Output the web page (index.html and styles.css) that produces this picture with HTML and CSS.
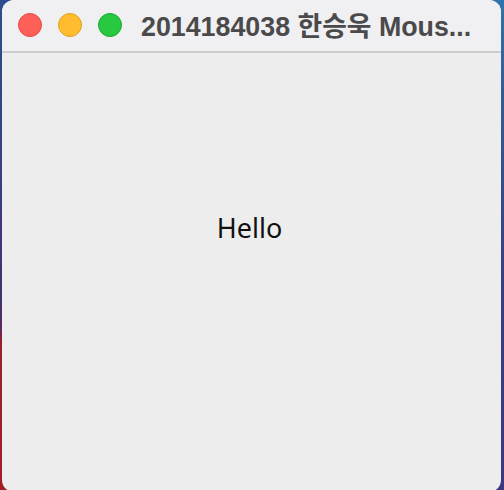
FILE: index.html
```html
<!DOCTYPE html>
<html lang="ko">
<head>
<meta charset="utf-8">
<title>Window</title>
<link rel="stylesheet" href="styles.css">
</head>
<body>
<div class="window">
  <div class="titlebar">
    <div class="lights">
      <span class="light red"></span>
      <span class="light yellow"></span>
      <span class="light green"></span>
    </div>
    <div class="title">2014184038 한승욱 Mous...</div>
  </div>
  <div class="content">
    <div class="hello">Hello</div>
  </div>
</div>
</body>
</html>
```
FILE: styles.css
```css
html, body {
  margin: 0;
  padding: 0;
  height: 100%;
}
body {
  width: 504px;
  height: 490px;
  overflow: hidden;
  background:
    linear-gradient(to bottom, #2d4c8e 0%, #36428a 30%, #44306e 62%, #5a2a5e 67%, #9c1e2c 70%, #a21d2a 100%) left top / 50% 100% no-repeat,
    linear-gradient(to bottom, #2f74aa 0%, #335c98 20%, #383f86 55%, #3d3680 100%) right top / 50% 100% no-repeat;
  font-family: "Liberation Sans", "Noto Sans CJK KR", sans-serif;
  display: flex;
  padding: 0 3px 0 2px;
  box-sizing: border-box;
}
.window {
  flex: 1;
  height: 492px;
  flex-shrink: 0;
  border-radius: 12px;
  overflow: hidden;
  background: #ededed;
  display: flex;
  flex-direction: column;
}
.titlebar {
  height: 53px;
  flex: none;
  background: #f0eff2;
  border-bottom: 2px solid #cdcdcd;
  display: flex;
  align-items: center;
  box-sizing: border-box;
  padding-left: 16px;
  padding-bottom: 2px;
}
.lights {
  display: flex;
  gap: 16px;
}
.light {
  width: 22px;
  height: 22px;
  border-radius: 50%;
  border: 1px solid;
}
.red { background: #fe5f57; border-color: #e24b43; }
.yellow { background: #febc2e; border-color: #dea123; }
.green { background: #28c840; border-color: #1aab2d; }
.title {
  margin-left: 19px;
  font-size: 26.8px;
  font-weight: bold;
  color: #4a4a4a;
  white-space: nowrap;
  font-family: "Liberation Sans", "Noto Sans CJK KR", sans-serif;
}
.content {
  flex: 1;
  display: flex;
  justify-content: center;
  padding-top: 159px;
  padding-right: 4px;
}
.hello {
  font-size: 27px;
  color: #111;
  font-family: "Noto Sans", sans-serif;
  line-height: 32px;
  height: 32px;
}
```
